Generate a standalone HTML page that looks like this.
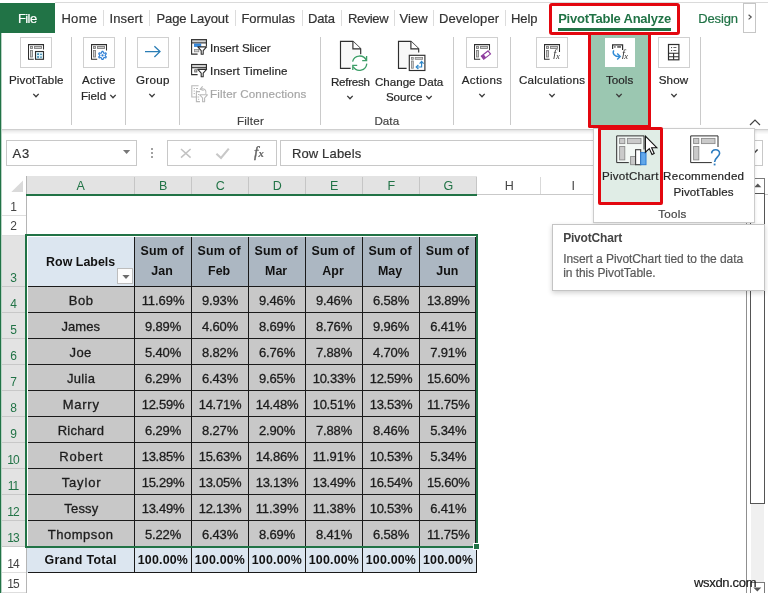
<!DOCTYPE html>
<html><head><meta charset="utf-8"><title>PivotTable Analyze</title>
<style>
html,body{margin:0;padding:0;}
body{width:768px;height:593px;position:relative;overflow:hidden;background:#fff;font-family:"Liberation Sans",sans-serif;}
.t{position:absolute;white-space:nowrap;line-height:1;-webkit-text-stroke:0.2px currentColor;}
.b{position:absolute;box-sizing:border-box;}
#w{position:absolute;left:0;top:0;width:768px;height:593px;will-change:transform;}
</style></head><body><div id="w">
<div class="b" style="left:0px;top:0px;width:768px;height:3px;background:#ffffff;"></div>
<div class="b" style="left:0px;top:3px;width:1px;height:590px;background:#217346;"></div>
<div class="b" style="left:1px;top:33px;width:1px;height:560px;background:#b9d3c5;"></div>
<div class="b" style="left:55px;top:2px;width:713px;height:1px;background:#dadada;"></div>
<div class="b" style="left:0px;top:3px;width:55px;height:30px;background:#217346;"></div>
<span class="t" style="left:17.90px;top:11.75px;font-size:13px;color:#fff;letter-spacing:-0.549px;">File</span>
<span class="t" style="left:61.40px;top:12.00px;font-size:13px;color:#333;letter-spacing:0.341px;">Home</span>
<span class="t" style="left:109.40px;top:12.00px;font-size:13px;color:#333;letter-spacing:0.137px;">Insert</span>
<span class="t" style="left:156.40px;top:12.00px;font-size:13px;color:#333;letter-spacing:-0.080px;">Page Layout</span>
<span class="t" style="left:241.40px;top:12.00px;font-size:13px;color:#333;letter-spacing:-0.068px;">Formulas</span>
<span class="t" style="left:307.90px;top:12.00px;font-size:13px;color:#333;letter-spacing:-0.087px;">Data</span>
<span class="t" style="left:347.90px;top:12.00px;font-size:13px;color:#333;letter-spacing:-0.385px;">Review</span>
<span class="t" style="left:399.40px;top:12.00px;font-size:13px;color:#333;letter-spacing:0.086px;">View</span>
<span class="t" style="left:438.90px;top:12.00px;font-size:13px;color:#333;letter-spacing:0.118px;">Developer</span>
<span class="t" style="left:510.90px;top:12.00px;font-size:13px;color:#333;letter-spacing:-0.012px;">Help</span>
<div class="b" style="left:103.0px;top:10px;width:1px;height:16px;background:#dcdcdc;"></div>
<div class="b" style="left:149.0px;top:10px;width:1px;height:16px;background:#dcdcdc;"></div>
<div class="b" style="left:235.0px;top:10px;width:1px;height:16px;background:#dcdcdc;"></div>
<div class="b" style="left:302.0px;top:10px;width:1px;height:16px;background:#dcdcdc;"></div>
<div class="b" style="left:340.5px;top:10px;width:1px;height:16px;background:#dcdcdc;"></div>
<div class="b" style="left:394.0px;top:10px;width:1px;height:16px;background:#dcdcdc;"></div>
<div class="b" style="left:433.25px;top:10px;width:1px;height:16px;background:#dcdcdc;"></div>
<div class="b" style="left:505.0px;top:10px;width:1px;height:16px;background:#dcdcdc;"></div>
<span class="t" style="left:558.20px;top:12.00px;font-size:13px;color:#217346;font-weight:bold;-webkit-text-stroke:0;letter-spacing:-0.237px;">PivotTable Analyze</span>
<div class="b" style="left:558px;top:28px;width:113px;height:3px;background:#217346;"></div>
<span class="t" style="left:698.20px;top:12.00px;font-size:13px;color:#217346;letter-spacing:-0.133px;">Design</span>
<div class="b" style="left:743px;top:3px;width:13px;height:30px;background:#fff;border:1px solid #c6c6c6;"></div>
<svg class="b" style="left:746px;top:12px;" width="8" height="11" viewBox="0 0 8 11"><path d="M2.6 2.8 L5.2 5.1 L2.6 7.4" fill="none" stroke="#555" stroke-width="1.2"/></svg>
<div class="b" style="left:2px;top:129px;width:766px;height:1px;background:#cfcfcf;"></div>
<div class="b" style="left:2px;top:130px;width:766px;height:1px;background:#e6e6e6;"></div>
<div class="b" style="left:2px;top:131px;width:766px;height:1px;background:#efefef;"></div>
<div class="b" style="left:2px;top:132px;width:766px;height:1px;background:#f5f5f5;"></div>
<div class="b" style="left:2px;top:133px;width:766px;height:1px;background:#fafafa;"></div>
<div class="b" style="left:71.0px;top:37px;width:1px;height:88px;background:#cacaca;"></div>
<div class="b" style="left:125.0px;top:37px;width:1px;height:88px;background:#cacaca;"></div>
<div class="b" style="left:179.0px;top:37px;width:1px;height:88px;background:#cacaca;"></div>
<div class="b" style="left:320.25px;top:37px;width:1px;height:88px;background:#cacaca;"></div>
<div class="b" style="left:453.0px;top:37px;width:1px;height:88px;background:#cacaca;"></div>
<div class="b" style="left:510.0px;top:37px;width:1px;height:88px;background:#cacaca;"></div>
<div class="b" style="left:699.5px;top:37px;width:1px;height:88px;background:#cacaca;"></div>
<div class="b" style="left:20px;top:37px;width:32px;height:31px;background:#fff;border:1px solid #d0d0d0;"></div>
<div class="b" style="left:83px;top:37px;width:32px;height:31px;background:#fff;border:1px solid #d0d0d0;"></div>
<div class="b" style="left:137px;top:37px;width:32px;height:31px;background:#fff;border:1px solid #d0d0d0;"></div>
<div class="b" style="left:466px;top:37px;width:32px;height:31px;background:#fff;border:1px solid #d0d0d0;"></div>
<div class="b" style="left:536px;top:37px;width:32px;height:31px;background:#fff;border:1px solid #d0d0d0;"></div>
<div class="b" style="left:658px;top:37px;width:32px;height:31px;background:#fff;border:1px solid #d0d0d0;"></div>
<div class="b" style="left:591px;top:35px;width:58px;height:90px;background:#9bc7b1;"></div>
<div class="b" style="left:604.8px;top:38px;width:30.4px;height:29px;background:#fff;"></div>
<span class="t" style="left:8.90px;top:73.93px;font-size:11.6px;color:#262626;letter-spacing:0.131px;">PivotTable</span>
<svg class="b" style="left:30.5px;top:91px;" width="10" height="8" viewBox="0 0 10 8"><path d="M2.3 2.9 L5 5.699999999999999 L7.7 2.9" fill="none" stroke="#3a3a3a" stroke-width="1.35"/></svg>
<span class="t" style="left:81.90px;top:73.93px;font-size:11.6px;color:#262626;letter-spacing:0.422px;">Active</span>
<span class="t" style="left:80.90px;top:89.68px;font-size:11.6px;color:#262626;letter-spacing:0.014px;">Field</span>
<svg class="b" style="left:107.5px;top:91.7px;" width="10" height="8" viewBox="0 0 10 8"><path d="M2.3 2.9 L5 5.699999999999999 L7.7 2.9" fill="none" stroke="#3a3a3a" stroke-width="1.35"/></svg>
<span class="t" style="left:135.90px;top:73.93px;font-size:11.6px;color:#262626;letter-spacing:0.303px;">Group</span>
<svg class="b" style="left:147px;top:91px;" width="10" height="8" viewBox="0 0 10 8"><path d="M2.3 2.9 L5 5.699999999999999 L7.7 2.9" fill="none" stroke="#3a3a3a" stroke-width="1.35"/></svg>
<span class="t" style="left:210.10px;top:42.18px;font-size:11.6px;color:#262626;letter-spacing:-0.062px;">Insert Slicer</span>
<span class="t" style="left:210.10px;top:65.18px;font-size:11.6px;color:#262626;letter-spacing:0.148px;">Insert Timeline</span>
<span class="t" style="left:210.10px;top:88.18px;font-size:11.6px;color:#a6a6a6;letter-spacing:0.163px;">Filter Connections</span>
<span class="t" style="left:236.90px;top:115.18px;font-size:11.6px;color:#444;letter-spacing:0.235px;">Filter</span>
<span class="t" style="left:330.90px;top:75.93px;font-size:11.6px;color:#262626;letter-spacing:-0.236px;">Refresh</span>
<svg class="b" style="left:345px;top:93px;" width="10" height="8" viewBox="0 0 10 8"><path d="M2.3 2.9 L5 5.699999999999999 L7.7 2.9" fill="none" stroke="#3a3a3a" stroke-width="1.35"/></svg>
<span class="t" style="left:374.90px;top:75.93px;font-size:11.6px;color:#262626;letter-spacing:0.009px;">Change Data</span>
<span class="t" style="left:385.90px;top:91.43px;font-size:11.6px;color:#262626;letter-spacing:-0.011px;">Source</span>
<svg class="b" style="left:423.7px;top:93px;" width="10" height="8" viewBox="0 0 10 8"><path d="M2.3 2.9 L5 5.699999999999999 L7.7 2.9" fill="none" stroke="#3a3a3a" stroke-width="1.35"/></svg>
<span class="t" style="left:374.40px;top:115.18px;font-size:11.6px;color:#444;letter-spacing:0.066px;">Data</span>
<span class="t" style="left:461.65px;top:73.93px;font-size:11.6px;color:#262626;letter-spacing:0.402px;">Actions</span>
<svg class="b" style="left:476.5px;top:91px;" width="10" height="8" viewBox="0 0 10 8"><path d="M2.3 2.9 L5 5.699999999999999 L7.7 2.9" fill="none" stroke="#3a3a3a" stroke-width="1.35"/></svg>
<span class="t" style="left:518.90px;top:73.93px;font-size:11.6px;color:#262626;letter-spacing:0.274px;">Calculations</span>
<svg class="b" style="left:546.5px;top:91px;" width="10" height="8" viewBox="0 0 10 8"><path d="M2.3 2.9 L5 5.699999999999999 L7.7 2.9" fill="none" stroke="#3a3a3a" stroke-width="1.35"/></svg>
<span class="t" style="left:605.90px;top:73.93px;font-size:11.6px;color:#262626;letter-spacing:0.080px;">Tools</span>
<svg class="b" style="left:614.3px;top:91px;" width="10" height="8" viewBox="0 0 10 8"><path d="M2.3 2.9 L5 5.699999999999999 L7.7 2.9" fill="none" stroke="#3a3a3a" stroke-width="1.35"/></svg>
<span class="t" style="left:658.70px;top:73.93px;font-size:11.6px;color:#262626;letter-spacing:0.161px;">Show</span>
<svg class="b" style="left:669px;top:91px;" width="10" height="8" viewBox="0 0 10 8"><path d="M2.3 2.9 L5 5.699999999999999 L7.7 2.9" fill="none" stroke="#3a3a3a" stroke-width="1.35"/></svg>
<svg class="b" style="left:748px;top:117px;" width="14" height="10" viewBox="0 0 14 10"><path d="M2 8 L7 3 L12 8" fill="none" stroke="#444" stroke-width="1.2"/></svg>
<svg class="b" style="left:28px;top:44px;" width="18" height="18" viewBox="0 0 18 18"><path d="M15.5 5.4 V0.6 H0.5 V15.3 H5.8" fill="none" stroke="#2e2e2e" stroke-width="1.05"/><rect x="2.5" y="2.5" width="2" height="2" fill="#cfcfcf" stroke="#808080" stroke-width="0.9"/><rect x="6.5" y="2.5" width="7" height="2" fill="#cfcfcf" stroke="#808080" stroke-width="0.9"/><rect x="2.5" y="6.5" width="2" height="6.5" fill="#cfcfcf" stroke="#808080" stroke-width="0.9"/><rect x="7.5" y="7.5" width="8" height="7.8" fill="#dff1f7" stroke="#2e2e2e" stroke-width="1.1"/><rect x="9.2" y="9.3" width="1.7" height="1.7" fill="#2e7fa8"/><rect x="9.2" y="12.1" width="1.7" height="1.7" fill="#2e7fa8"/><rect x="12" y="9.8" width="2" height="1" fill="#2e7fa8"/><rect x="12" y="12.6" width="2" height="1" fill="#2e7fa8"/></svg>
<svg class="b" style="left:91px;top:44px;" width="18" height="18" viewBox="0 0 18 18"><path d="M15.5 6.6 V0.6 H0.5 V15.3 H6.2" fill="none" stroke="#2e2e2e" stroke-width="1.05"/><rect x="2.5" y="2.5" width="2" height="2" fill="#cfcfcf" stroke="#808080" stroke-width="0.9"/><rect x="6.5" y="2.5" width="7" height="2" fill="#cfcfcf" stroke="#808080" stroke-width="0.9"/><rect x="2.5" y="6.5" width="2" height="6.5" fill="#cfcfcf" stroke="#808080" stroke-width="0.9"/><path d="M10.96 7.34 L12.04 7.34 L12.53 8.91 L13.14 9.26 L14.75 8.90 L15.29 9.83 L14.18 11.05 L14.18 11.75 L15.29 12.97 L14.75 13.90 L13.14 13.54 L12.53 13.89 L12.04 15.46 L10.96 15.46 L10.47 13.89 L9.86 13.54 L8.25 13.90 L7.71 12.97 L8.82 11.75 L8.82 11.05 L7.71 9.83 L8.25 8.90 L9.86 9.26 L10.47 8.91 Z" fill="#fff" stroke="#2b7cd3" stroke-width="1.15" stroke-linejoin="round"/><circle cx="11.5" cy="11.4" r="1.15" fill="#2b7cd3"/></svg>
<svg class="b" style="left:143px;top:44px;" width="20" height="16" viewBox="0 0 20 16"><path d="M2 7.6 H17 M11.4 2.2 L17 7.6 L11.4 13" fill="none" stroke="#2a7db5" stroke-width="1.3"/></svg>
<svg class="b" style="left:191px;top:39px;" width="17" height="17" viewBox="0 0 17 17"><path d="M6.6 15.1 H0.6 V0.7 H15.4 V7" fill="none" stroke="#2e2e2e" stroke-width="1.1"/><rect x="0.6" y="0.7" width="14.8" height="3.2" fill="#d4d4d4" stroke="#2e2e2e" stroke-width="1.1"/><rect x="3.4" y="5" width="6.4" height="2.4" fill="#3b8ede" stroke="#2b7cd3" stroke-width="0.8"/><rect x="3.4" y="10.4" width="4.4" height="2.4" fill="#d0d0d0" stroke="#8c8c8c" stroke-width="0.8"/><path d="M6.8 7.9 H15.600000000000001 L12.2 11.7 V15.3 H10.2 V11.7 Z" fill="#fff" stroke="#2e2e2e" stroke-width="1.1" stroke-linejoin="round"/></svg>
<svg class="b" style="left:191px;top:63px;" width="17" height="16" viewBox="0 0 17 16"><path d="M6.6 11.6 H0.6 V1.5 H15.4 V6" fill="none" stroke="#2e2e2e" stroke-width="1.1"/><rect x="0.6" y="1.5" width="14.8" height="3.2" fill="#d4d4d4" stroke="#2e2e2e" stroke-width="1.1"/><rect x="3.7" y="6.8" width="2.2" height="2.2" fill="#d0d0d0" stroke="#5c5c5c" stroke-width="0.8"/><path d="M6.8 6.4 H15.600000000000001 L12.2 10.2 V13.8 H10.2 V10.2 Z" fill="#fff" stroke="#2e2e2e" stroke-width="1.1" stroke-linejoin="round"/></svg>
<svg class="b" style="left:191px;top:84.5px;" width="19" height="18" viewBox="0 0 19 18"><path d="M6.5 12 H0.8 V0.8 H7.6 " fill="none" stroke="#b9b9b9" stroke-width="1.1"/><path d="M2.6 3.5 h1.4 M5 3.5 h2 M2.6 6 h1.4 M5 6 h1 M2.6 8.6 h1.4" stroke="#b9b9b9" stroke-width="1"/><path d="M9 16.6 H5.4 V6.6 H9" fill="none" stroke="#b9b9b9" stroke-width="1.1"/><path d="M7 9.5 h1.2 M7 12 h1.2 M7 14.3 h1.2" stroke="#b9b9b9" stroke-width="1"/><path d="M9.5 4.2 C13 2.6 16 5.5 14.8 9" fill="none" stroke="#b9b9b9" stroke-width="1.1"/><path d="M11.6 1.4 L9.2 4.3 L12.6 5.6" fill="none" stroke="#b9b9b9" stroke-width="1.1"/><path d="M8.8 9.8 H16.4 L13.6 13 V16.8 H11.6 V13 Z" fill="#fff" stroke="#b9b9b9" stroke-width="1.1" stroke-linejoin="round"/></svg>
<svg class="b" style="left:338px;top:39px;" width="32" height="34" viewBox="0 0 32 34"><path d="M12.6 29.4 H2.5 V2.4 H14.9 L22.7 9.8 V15.2" fill="#f8f8f8" stroke="#2e2e2e" stroke-width="1.15"/><path d="M14.9 2.4 V9.8 H22.7" fill="#fff" stroke="#2e2e2e" stroke-width="1.15"/><circle cx="21.7" cy="24.3" r="8.6" fill="#fff"/><path d="M14.6 22.6 A7.3 7.3 0 0 1 28.3 21.2" fill="none" stroke="#3d9e68" stroke-width="1.3"/><path d="M28.8 24.6 A7.3 7.3 0 0 1 15.2 27.6" fill="none" stroke="#3d9e68" stroke-width="1.3"/><path d="M24.2 21.6 H28.6 V17" fill="none" stroke="#3d9e68" stroke-width="1.3"/><path d="M19.2 26.4 H14.8 V31" fill="none" stroke="#3d9e68" stroke-width="1.3"/></svg>
<svg class="b" style="left:396px;top:39px;" width="32" height="34" viewBox="0 0 32 34"><path d="M10.6 29.4 H2.5 V2.4 H14.9 L22.7 9.8 V13.6" fill="#f8f8f8" stroke="#2e2e2e" stroke-width="1.15"/><path d="M14.9 2.4 V9.8 H22.7" fill="#fff" stroke="#2e2e2e" stroke-width="1.15"/><rect x="13.3" y="16.3" width="15.6" height="15.2" fill="#fff" stroke="#2e2e2e" stroke-width="1.15"/><rect x="15.5" y="18.5" width="1.8" height="1.8" fill="#cfcfcf" stroke="#808080" stroke-width="0.8"/><rect x="19.2" y="18.5" width="7.4" height="1.8" fill="#cfcfcf" stroke="#808080" stroke-width="0.8"/><rect x="15.5" y="22" width="1.8" height="7.2" fill="#cfcfcf" stroke="#808080" stroke-width="0.8"/><path d="M20.6 28 H25.6 V23" fill="none" stroke="#2e86c8" stroke-width="1.2"/><path d="M22.4 26 L20.2 28 L22.4 30" fill="none" stroke="#2e86c8" stroke-width="1.2"/><path d="M23.6 24.6 L25.6 22.4 L27.6 24.6" fill="none" stroke="#2e86c8" stroke-width="1.2"/></svg>
<svg class="b" style="left:474px;top:44px;" width="18" height="18" viewBox="0 0 18 18"><path d="M15.5 6.2 V0.6 H0.5 V15.3 H6.2" fill="none" stroke="#2e2e2e" stroke-width="1.05"/><rect x="2.5" y="2.5" width="2" height="2" fill="#cfcfcf" stroke="#808080" stroke-width="0.9"/><rect x="6.5" y="2.5" width="7" height="2" fill="#cfcfcf" stroke="#808080" stroke-width="0.9"/><rect x="2.5" y="6.5" width="2" height="6.5" fill="#cfcfcf" stroke="#808080" stroke-width="0.9"/><g transform="translate(11.9,11.1) rotate(-38)"><rect x="-4.3" y="-2" width="8.6" height="4" fill="#fff" stroke="#8f3d9f" stroke-width="1.1"/><rect x="-4.3" y="-2" width="3" height="4" fill="#8f3d9f"/></g></svg>
<svg class="b" style="left:544px;top:44px;" width="18" height="18" viewBox="0 0 18 18"><path d="M15.5 8 V0.6 H0.5 V15.3 H5.6" fill="none" stroke="#2e2e2e" stroke-width="1.05"/><rect x="2.5" y="2.5" width="2" height="2" fill="#cfcfcf" stroke="#808080" stroke-width="0.9"/><rect x="6.5" y="2.5" width="7" height="2" fill="#cfcfcf" stroke="#808080" stroke-width="0.9"/><rect x="2.5" y="6.5" width="2" height="6.5" fill="#cfcfcf" stroke="#808080" stroke-width="0.9"/><text x="9.3" y="13.3" style="font-family:'Liberation Serif',serif;font-style:italic;font-size:10.8px;" fill="#333">f</text><text x="12" y="14.9" style="font-family:'Liberation Serif',serif;font-style:italic;font-size:8.6px;" fill="#333">x</text></svg>
<svg class="b" style="left:610px;top:42px;" width="22" height="20" viewBox="0 0 22 20"><path d="M2.6 7 V2.8 H12.6 V8" fill="none" stroke="#2e2e2e" stroke-width="1.2"/><rect x="4.2" y="4.3" width="1.4" height="1.3" fill="#333"/><rect x="7.2" y="4.3" width="3.8" height="1.3" fill="#333"/><path d="M3.8 8.4 C2 11.5 4.5 14.6 9.6 14.6" fill="none" stroke="#2e8ad6" stroke-width="1.4"/><path d="M7.2 11.6 L10.2 14.6 L7.2 17.6" fill="none" stroke="#2e8ad6" stroke-width="1.4"/><text x="11.9" y="15.3" style="font-family:'Liberation Serif',serif;font-style:italic;font-size:10.8px;" fill="#333">f</text><text x="14.3" y="16.9" style="font-family:'Liberation Serif',serif;font-style:italic;font-size:8.6px;" fill="#333">x</text></svg>
<svg class="b" style="left:667px;top:43px;" width="14" height="18" viewBox="0 0 14 18"><rect x="1.5" y="1.5" width="10.4" height="15.3" fill="#fff" stroke="#2e2e2e" stroke-width="1.2"/><path d="M1.5 10.3 H11.9 M1.5 13.7 H11.9 M6.6 10.3 V16.8" stroke="#2e2e2e" stroke-width="1.1"/><rect x="4" y="4" width="1.1" height="1.1" fill="#555"/><rect x="6.4" y="4.1" width="3" height="0.9" fill="#555"/><rect x="4" y="7" width="1.1" height="1.1" fill="#555"/><rect x="6.4" y="7.1" width="3" height="0.9" fill="#555"/></svg>
<div class="b" style="left:549px;top:3px;width:131px;height:32px;border:3px solid #e3070f;border-radius:3px;"></div>
<div class="b" style="left:588px;top:32px;width:63px;height:95.6px;border:3px solid #e3070f;border-top:none;border-radius:0 0 2px 2px;"></div>
<div class="b" style="left:6px;top:140px;width:131px;height:26px;background:#fff;border:1px solid #c8c8c8;"></div>
<span class="t" style="left:12.40px;top:146.50px;font-size:13px;color:#333;letter-spacing:1.049px;">A3</span>
<svg class="b" style="left:122px;top:149px;" width="10" height="6" viewBox="0 0 10 6"><path d="M1 1 H8.2 L4.6 4.9 Z" fill="#777"/></svg>
<div class="b" style="left:151px;top:148px;width:2px;height:2px;background:#a2a2a2;"></div>
<div class="b" style="left:151px;top:152px;width:2px;height:2px;background:#a2a2a2;"></div>
<div class="b" style="left:151px;top:156px;width:2px;height:2px;background:#a2a2a2;"></div>
<div class="b" style="left:167px;top:140px;width:110px;height:26px;background:#fff;border:1px solid #c8c8c8;"></div>
<svg class="b" style="left:180px;top:148px;" width="12" height="11" viewBox="0 0 12 11"><path d="M1 1 L10.6 9.6 M10.6 1 L1 9.6" stroke="#c2c2c2" stroke-width="1.5" fill="none"/></svg>
<svg class="b" style="left:215px;top:147px;" width="16" height="13" viewBox="0 0 16 13"><path d="M1.4 6.8 L6 11 L13.8 1.6" stroke="#c8c8c8" stroke-width="2.1" fill="none"/></svg>
<span class="t" style="left:254px;top:144.6px;font-size:15px;font-family:'Liberation Serif',serif;font-style:italic;color:#666;-webkit-text-stroke:0.4px #666;">f</span>
<span class="t" style="left:258.6px;top:149px;font-size:10.5px;font-family:'Liberation Serif',serif;font-style:italic;font-weight:bold;color:#666;">x</span>
<div class="b" style="left:280px;top:140px;width:483px;height:26px;background:#fff;border:1px solid #c8c8c8;"></div>
<svg class="b" style="left:750px;top:148px;" width="9" height="7" viewBox="0 0 9 7"><path d="M1.2 1.6 L4.3 5 L7.6 1.4" fill="none" stroke="#444" stroke-width="1.5"/></svg>
<span class="t" style="left:291.90px;top:146.80px;font-size:13px;color:#333;letter-spacing:0.153px;">Row Labels</span>
<div class="b" style="left:26px;top:176px;width:450.5px;height:18px;background:#e3e3e3;"></div>
<div class="b" style="left:26px;top:194px;width:742px;height:1px;background:#c9c9c9;"></div>
<span class="t" style="left:76.53px;top:179.72px;font-size:12.5px;color:#217346;-webkit-text-stroke:0;">A</span>
<div class="b" style="left:133.5px;top:177px;width:1px;height:17px;background:#c6c6c6;"></div>
<span class="t" style="left:159.03px;top:179.72px;font-size:12.5px;color:#217346;-webkit-text-stroke:0;">B</span>
<div class="b" style="left:190.5px;top:177px;width:1px;height:17px;background:#c6c6c6;"></div>
<span class="t" style="left:215.69px;top:179.72px;font-size:12.5px;color:#217346;-webkit-text-stroke:0;">C</span>
<div class="b" style="left:247.5px;top:177px;width:1px;height:17px;background:#c6c6c6;"></div>
<span class="t" style="left:272.69px;top:179.72px;font-size:12.5px;color:#217346;-webkit-text-stroke:0;">D</span>
<div class="b" style="left:304.5px;top:177px;width:1px;height:17px;background:#c6c6c6;"></div>
<span class="t" style="left:330.03px;top:179.72px;font-size:12.5px;color:#217346;-webkit-text-stroke:0;">E</span>
<div class="b" style="left:361.5px;top:177px;width:1px;height:17px;background:#c6c6c6;"></div>
<span class="t" style="left:387.38px;top:179.72px;font-size:12.5px;color:#217346;-webkit-text-stroke:0;">F</span>
<div class="b" style="left:418.5px;top:177px;width:1px;height:17px;background:#c6c6c6;"></div>
<span class="t" style="left:443.59px;top:179.72px;font-size:12.5px;color:#217346;-webkit-text-stroke:0;">G</span>
<div class="b" style="left:476.0px;top:177px;width:1px;height:17px;background:#c6c6c6;"></div>
<span class="t" style="left:504.69px;top:179.72px;font-size:12.5px;color:#444;-webkit-text-stroke:0;">H</span>
<div class="b" style="left:540.0px;top:177px;width:1px;height:17px;background:#d9d9d9;"></div>
<span class="t" style="left:571.46px;top:179.72px;font-size:12.5px;color:#444;-webkit-text-stroke:0;">I</span>
<div class="b" style="left:604.0px;top:177px;width:1px;height:17px;background:#d9d9d9;"></div>
<div class="b" style="left:26px;top:194px;width:450.5px;height:2px;background:#217346;"></div>
<svg class="b" style="left:11px;top:180px;" width="13" height="13" viewBox="0 0 13 13"><path d="M12 0.6 V12 H0.3 Z" fill="#dadada"/></svg>
<div class="b" style="left:26px;top:176px;width:1px;height:18px;background:#b5b5b5;"></div>
<div class="b" style="left:2px;top:236px;width:24px;height:310.5px;background:#e3e3e3;"></div>
<span class="t" style="left:10.26px;top:200.64px;font-size:12px;color:#444;letter-spacing:-0.200px;-webkit-text-stroke:0;">1</span>
<div class="b" style="left:2px;top:215.0px;width:24px;height:1px;background:#dedede;"></div>
<span class="t" style="left:10.26px;top:220.14px;font-size:12px;color:#444;letter-spacing:-0.200px;-webkit-text-stroke:0;">2</span>
<div class="b" style="left:2px;top:234.5px;width:24px;height:1px;background:#dedede;"></div>
<span class="t" style="left:10.26px;top:271.64px;font-size:12px;color:#217346;letter-spacing:-0.200px;-webkit-text-stroke:0;">3</span>
<div class="b" style="left:2px;top:286.0px;width:24px;height:1px;background:#c8c8c8;"></div>
<span class="t" style="left:10.26px;top:297.64px;font-size:12px;color:#217346;letter-spacing:-0.200px;-webkit-text-stroke:0;">4</span>
<div class="b" style="left:2px;top:312.0px;width:24px;height:1px;background:#c8c8c8;"></div>
<span class="t" style="left:10.26px;top:323.64px;font-size:12px;color:#217346;letter-spacing:-0.200px;-webkit-text-stroke:0;">5</span>
<div class="b" style="left:2px;top:338.0px;width:24px;height:1px;background:#c8c8c8;"></div>
<span class="t" style="left:10.26px;top:349.64px;font-size:12px;color:#217346;letter-spacing:-0.200px;-webkit-text-stroke:0;">6</span>
<div class="b" style="left:2px;top:364.0px;width:24px;height:1px;background:#c8c8c8;"></div>
<span class="t" style="left:10.26px;top:375.64px;font-size:12px;color:#217346;letter-spacing:-0.200px;-webkit-text-stroke:0;">7</span>
<div class="b" style="left:2px;top:390.0px;width:24px;height:1px;background:#c8c8c8;"></div>
<span class="t" style="left:10.26px;top:401.64px;font-size:12px;color:#217346;letter-spacing:-0.200px;-webkit-text-stroke:0;">8</span>
<div class="b" style="left:2px;top:416.0px;width:24px;height:1px;background:#c8c8c8;"></div>
<span class="t" style="left:10.26px;top:427.64px;font-size:12px;color:#217346;letter-spacing:-0.200px;-webkit-text-stroke:0;">9</span>
<div class="b" style="left:2px;top:442.0px;width:24px;height:1px;background:#c8c8c8;"></div>
<span class="t" style="left:7.33px;top:453.64px;font-size:12px;color:#217346;letter-spacing:-1.000px;-webkit-text-stroke:0;">10</span>
<div class="b" style="left:2px;top:468.0px;width:24px;height:1px;background:#c8c8c8;"></div>
<span class="t" style="left:7.77px;top:479.64px;font-size:12px;color:#217346;letter-spacing:-1.000px;-webkit-text-stroke:0;">11</span>
<div class="b" style="left:2px;top:494.0px;width:24px;height:1px;background:#c8c8c8;"></div>
<span class="t" style="left:7.33px;top:505.64px;font-size:12px;color:#217346;letter-spacing:-1.000px;-webkit-text-stroke:0;">12</span>
<div class="b" style="left:2px;top:520.0px;width:24px;height:1px;background:#c8c8c8;"></div>
<span class="t" style="left:7.33px;top:531.64px;font-size:12px;color:#217346;letter-spacing:-1.000px;-webkit-text-stroke:0;">13</span>
<div class="b" style="left:2px;top:546.0px;width:24px;height:1px;background:#c8c8c8;"></div>
<span class="t" style="left:7.33px;top:557.64px;font-size:12px;color:#444;letter-spacing:-1.000px;-webkit-text-stroke:0;">14</span>
<div class="b" style="left:2px;top:572.0px;width:24px;height:1px;background:#dedede;"></div>
<span class="t" style="left:7.33px;top:577.64px;font-size:12px;color:#444;letter-spacing:-1.000px;-webkit-text-stroke:0;">15</span>
<div class="b" style="left:2px;top:592.0px;width:24px;height:1px;background:#dedede;"></div>
<div class="b" style="left:26px;top:196px;width:1px;height:397px;background:#b5b5b5;"></div>
<div class="b" style="left:28px;top:237px;width:106px;height:49.5px;background:#dce6f0;"></div>
<div class="b" style="left:134px;top:237px;width:342px;height:49.5px;background:#acb7c2;"></div>
<div class="b" style="left:28px;top:287px;width:448px;height:259.5px;background:#c8c8c8;"></div>
<div class="b" style="left:27px;top:548px;width:449.5px;height:24.5px;background:#dce6f0;"></div>
<div class="b" style="left:134px;top:237px;width:1px;height:309px;background:#1a1a1a;"></div>
<div class="b" style="left:134px;top:548px;width:1px;height:25px;background:#1a1a1a;"></div>
<div class="b" style="left:191px;top:237px;width:1px;height:309px;background:#1a1a1a;"></div>
<div class="b" style="left:191px;top:548px;width:1px;height:25px;background:#1a1a1a;"></div>
<div class="b" style="left:248px;top:237px;width:1px;height:309px;background:#1a1a1a;"></div>
<div class="b" style="left:248px;top:548px;width:1px;height:25px;background:#1a1a1a;"></div>
<div class="b" style="left:305px;top:237px;width:1px;height:309px;background:#1a1a1a;"></div>
<div class="b" style="left:305px;top:548px;width:1px;height:25px;background:#1a1a1a;"></div>
<div class="b" style="left:362px;top:237px;width:1px;height:309px;background:#1a1a1a;"></div>
<div class="b" style="left:362px;top:548px;width:1px;height:25px;background:#1a1a1a;"></div>
<div class="b" style="left:419px;top:237px;width:1px;height:309px;background:#1a1a1a;"></div>
<div class="b" style="left:419px;top:548px;width:1px;height:25px;background:#1a1a1a;"></div>
<div class="b" style="left:475px;top:237px;width:1px;height:309px;background:#1a1a1a;"></div>
<div class="b" style="left:476px;top:548px;width:1px;height:25px;background:#1a1a1a;"></div>
<div class="b" style="left:28px;top:286px;width:448px;height:1px;background:#1a1a1a;"></div>
<div class="b" style="left:28px;top:312px;width:448px;height:1px;background:#1a1a1a;"></div>
<div class="b" style="left:28px;top:338px;width:448px;height:1px;background:#1a1a1a;"></div>
<div class="b" style="left:28px;top:364px;width:448px;height:1px;background:#1a1a1a;"></div>
<div class="b" style="left:28px;top:390px;width:448px;height:1px;background:#1a1a1a;"></div>
<div class="b" style="left:28px;top:416px;width:448px;height:1px;background:#1a1a1a;"></div>
<div class="b" style="left:28px;top:442px;width:448px;height:1px;background:#1a1a1a;"></div>
<div class="b" style="left:28px;top:468px;width:448px;height:1px;background:#1a1a1a;"></div>
<div class="b" style="left:28px;top:494px;width:448px;height:1px;background:#1a1a1a;"></div>
<div class="b" style="left:28px;top:520px;width:448px;height:1px;background:#1a1a1a;"></div>
<div class="b" style="left:28px;top:572px;width:449px;height:1px;background:#1a1a1a;"></div>
<div class="b" style="left:25px;top:234px;width:453px;height:2px;background:#217346;"></div>
<div class="b" style="left:25px;top:234px;width:2px;height:314px;background:#217346;"></div>
<div class="b" style="left:25px;top:546px;width:450px;height:2px;background:#217346;"></div>
<div class="b" style="left:476px;top:234px;width:2px;height:310px;background:#217346;"></div>
<div class="b" style="left:473px;top:543.3px;width:7px;height:7px;background:#fff;"></div>
<div class="b" style="left:474px;top:544.3px;width:5.2px;height:5.2px;background:#217346;"></div>
<span class="t" style="left:46.10px;top:255.70px;font-size:12.4px;color:#111;font-weight:bold;-webkit-text-stroke:0;letter-spacing:0.033px;-webkit-text-stroke:0;">Row Labels</span>
<div class="b" style="left:117.4px;top:268.4px;width:16px;height:16px;background:#fcfcfc;border:1px solid #bdbdbd;"></div>
<svg class="b" style="left:121.6px;top:274px;" width="9" height="6" viewBox="0 0 9 6"><path d="M0.4 1 H7.6 L4 5 Z" fill="#6a6a6a"/></svg>
<span class="t" style="left:140.50px;top:244.90px;font-size:12.4px;color:#111;font-weight:bold;-webkit-text-stroke:0;letter-spacing:0.236px;-webkit-text-stroke:0;">Sum of</span>
<span class="t" style="left:151.35px;top:265.10px;font-size:12.4px;color:#111;font-weight:bold;-webkit-text-stroke:0;letter-spacing:0.066px;-webkit-text-stroke:0;">Jan</span>
<span class="t" style="left:197.50px;top:244.90px;font-size:12.4px;color:#111;font-weight:bold;-webkit-text-stroke:0;letter-spacing:0.236px;-webkit-text-stroke:0;">Sum of</span>
<span class="t" style="left:208.03px;top:265.10px;font-size:12.4px;color:#111;font-weight:bold;-webkit-text-stroke:0;letter-spacing:0.049px;-webkit-text-stroke:0;">Feb</span>
<span class="t" style="left:254.50px;top:244.90px;font-size:12.4px;color:#111;font-weight:bold;-webkit-text-stroke:0;letter-spacing:0.236px;-webkit-text-stroke:0;">Sum of</span>
<span class="t" style="left:265.03px;top:265.10px;font-size:12.4px;color:#111;font-weight:bold;-webkit-text-stroke:0;letter-spacing:0.049px;-webkit-text-stroke:0;">Mar</span>
<span class="t" style="left:311.50px;top:244.90px;font-size:12.4px;color:#111;font-weight:bold;-webkit-text-stroke:0;letter-spacing:0.236px;-webkit-text-stroke:0;">Sum of</span>
<span class="t" style="left:322.36px;top:265.10px;font-size:12.4px;color:#111;font-weight:bold;-webkit-text-stroke:0;letter-spacing:0.066px;-webkit-text-stroke:0;">Apr</span>
<span class="t" style="left:368.50px;top:244.90px;font-size:12.4px;color:#111;font-weight:bold;-webkit-text-stroke:0;letter-spacing:0.236px;-webkit-text-stroke:0;">Sum of</span>
<span class="t" style="left:378.04px;top:265.10px;font-size:12.4px;color:#111;font-weight:bold;-webkit-text-stroke:0;-webkit-text-stroke:0;">May</span>
<span class="t" style="left:425.75px;top:244.90px;font-size:12.4px;color:#111;font-weight:bold;-webkit-text-stroke:0;letter-spacing:0.236px;-webkit-text-stroke:0;">Sum of</span>
<span class="t" style="left:436.28px;top:265.10px;font-size:12.4px;color:#111;font-weight:bold;-webkit-text-stroke:0;letter-spacing:0.049px;-webkit-text-stroke:0;">Jun</span>
<span class="t" style="left:68.70px;top:294.00px;font-size:13px;color:#1c1c1c;letter-spacing:0.535px;-webkit-text-stroke:0.3px #1c1c1c;">Bob</span>
<span class="t" style="left:141.65px;top:294.00px;font-size:13px;color:#1c1c1c;letter-spacing:-0.045px;-webkit-text-stroke:0.3px #1c1c1c;">11.69%</span>
<span class="t" style="left:202.00px;top:294.00px;font-size:13px;color:#1c1c1c;letter-spacing:-0.165px;-webkit-text-stroke:0.3px #1c1c1c;">9.93%</span>
<span class="t" style="left:259.00px;top:294.00px;font-size:13px;color:#1c1c1c;letter-spacing:-0.165px;-webkit-text-stroke:0.3px #1c1c1c;">9.46%</span>
<span class="t" style="left:316.00px;top:294.00px;font-size:13px;color:#1c1c1c;letter-spacing:-0.165px;-webkit-text-stroke:0.3px #1c1c1c;">9.46%</span>
<span class="t" style="left:373.00px;top:294.00px;font-size:13px;color:#1c1c1c;letter-spacing:-0.165px;-webkit-text-stroke:0.3px #1c1c1c;">6.58%</span>
<span class="t" style="left:426.90px;top:294.00px;font-size:13px;color:#1c1c1c;letter-spacing:-0.238px;-webkit-text-stroke:0.3px #1c1c1c;">13.89%</span>
<span class="t" style="left:61.45px;top:320.00px;font-size:13px;color:#1c1c1c;letter-spacing:0.053px;-webkit-text-stroke:0.3px #1c1c1c;">James</span>
<span class="t" style="left:145.00px;top:320.00px;font-size:13px;color:#1c1c1c;letter-spacing:-0.165px;-webkit-text-stroke:0.3px #1c1c1c;">9.89%</span>
<span class="t" style="left:202.00px;top:320.00px;font-size:13px;color:#1c1c1c;letter-spacing:-0.165px;-webkit-text-stroke:0.3px #1c1c1c;">4.60%</span>
<span class="t" style="left:259.00px;top:320.00px;font-size:13px;color:#1c1c1c;letter-spacing:-0.165px;-webkit-text-stroke:0.3px #1c1c1c;">8.69%</span>
<span class="t" style="left:316.00px;top:320.00px;font-size:13px;color:#1c1c1c;letter-spacing:-0.165px;-webkit-text-stroke:0.3px #1c1c1c;">8.76%</span>
<span class="t" style="left:373.00px;top:320.00px;font-size:13px;color:#1c1c1c;letter-spacing:-0.165px;-webkit-text-stroke:0.3px #1c1c1c;">9.96%</span>
<span class="t" style="left:430.25px;top:320.00px;font-size:13px;color:#1c1c1c;letter-spacing:-0.165px;-webkit-text-stroke:0.3px #1c1c1c;">6.41%</span>
<span class="t" style="left:69.45px;top:346.00px;font-size:13px;color:#1c1c1c;letter-spacing:0.470px;-webkit-text-stroke:0.3px #1c1c1c;">Joe</span>
<span class="t" style="left:145.00px;top:346.00px;font-size:13px;color:#1c1c1c;letter-spacing:-0.165px;-webkit-text-stroke:0.3px #1c1c1c;">5.40%</span>
<span class="t" style="left:202.00px;top:346.00px;font-size:13px;color:#1c1c1c;letter-spacing:-0.165px;-webkit-text-stroke:0.3px #1c1c1c;">8.82%</span>
<span class="t" style="left:259.00px;top:346.00px;font-size:13px;color:#1c1c1c;letter-spacing:-0.165px;-webkit-text-stroke:0.3px #1c1c1c;">6.76%</span>
<span class="t" style="left:316.00px;top:346.00px;font-size:13px;color:#1c1c1c;letter-spacing:-0.165px;-webkit-text-stroke:0.3px #1c1c1c;">7.88%</span>
<span class="t" style="left:373.00px;top:346.00px;font-size:13px;color:#1c1c1c;letter-spacing:-0.165px;-webkit-text-stroke:0.3px #1c1c1c;">4.70%</span>
<span class="t" style="left:430.25px;top:346.00px;font-size:13px;color:#1c1c1c;letter-spacing:-0.165px;-webkit-text-stroke:0.3px #1c1c1c;">7.91%</span>
<span class="t" style="left:67.05px;top:372.00px;font-size:13px;color:#1c1c1c;letter-spacing:0.291px;-webkit-text-stroke:0.3px #1c1c1c;">Julia</span>
<span class="t" style="left:145.00px;top:372.00px;font-size:13px;color:#1c1c1c;letter-spacing:-0.165px;-webkit-text-stroke:0.3px #1c1c1c;">6.29%</span>
<span class="t" style="left:202.00px;top:372.00px;font-size:13px;color:#1c1c1c;letter-spacing:-0.165px;-webkit-text-stroke:0.3px #1c1c1c;">6.43%</span>
<span class="t" style="left:259.00px;top:372.00px;font-size:13px;color:#1c1c1c;letter-spacing:-0.165px;-webkit-text-stroke:0.3px #1c1c1c;">9.65%</span>
<span class="t" style="left:312.65px;top:372.00px;font-size:13px;color:#1c1c1c;letter-spacing:-0.238px;-webkit-text-stroke:0.3px #1c1c1c;">10.33%</span>
<span class="t" style="left:369.65px;top:372.00px;font-size:13px;color:#1c1c1c;letter-spacing:-0.238px;-webkit-text-stroke:0.3px #1c1c1c;">12.59%</span>
<span class="t" style="left:426.90px;top:372.00px;font-size:13px;color:#1c1c1c;letter-spacing:-0.238px;-webkit-text-stroke:0.3px #1c1c1c;">15.60%</span>
<span class="t" style="left:62.70px;top:398.00px;font-size:13px;color:#1c1c1c;letter-spacing:0.746px;-webkit-text-stroke:0.3px #1c1c1c;">Marry</span>
<span class="t" style="left:141.65px;top:398.00px;font-size:13px;color:#1c1c1c;letter-spacing:-0.238px;-webkit-text-stroke:0.3px #1c1c1c;">12.59%</span>
<span class="t" style="left:198.65px;top:398.00px;font-size:13px;color:#1c1c1c;letter-spacing:-0.238px;-webkit-text-stroke:0.3px #1c1c1c;">14.71%</span>
<span class="t" style="left:255.65px;top:398.00px;font-size:13px;color:#1c1c1c;letter-spacing:-0.238px;-webkit-text-stroke:0.3px #1c1c1c;">14.48%</span>
<span class="t" style="left:312.65px;top:398.00px;font-size:13px;color:#1c1c1c;letter-spacing:-0.238px;-webkit-text-stroke:0.3px #1c1c1c;">10.51%</span>
<span class="t" style="left:369.65px;top:398.00px;font-size:13px;color:#1c1c1c;letter-spacing:-0.238px;-webkit-text-stroke:0.3px #1c1c1c;">13.53%</span>
<span class="t" style="left:426.90px;top:398.00px;font-size:13px;color:#1c1c1c;letter-spacing:-0.045px;-webkit-text-stroke:0.3px #1c1c1c;">11.75%</span>
<span class="t" style="left:57.70px;top:424.00px;font-size:13px;color:#1c1c1c;letter-spacing:0.234px;-webkit-text-stroke:0.3px #1c1c1c;">Richard</span>
<span class="t" style="left:145.00px;top:424.00px;font-size:13px;color:#1c1c1c;letter-spacing:-0.165px;-webkit-text-stroke:0.3px #1c1c1c;">6.29%</span>
<span class="t" style="left:202.00px;top:424.00px;font-size:13px;color:#1c1c1c;letter-spacing:-0.165px;-webkit-text-stroke:0.3px #1c1c1c;">8.27%</span>
<span class="t" style="left:259.00px;top:424.00px;font-size:13px;color:#1c1c1c;letter-spacing:-0.165px;-webkit-text-stroke:0.3px #1c1c1c;">2.90%</span>
<span class="t" style="left:316.00px;top:424.00px;font-size:13px;color:#1c1c1c;letter-spacing:-0.165px;-webkit-text-stroke:0.3px #1c1c1c;">7.88%</span>
<span class="t" style="left:373.00px;top:424.00px;font-size:13px;color:#1c1c1c;letter-spacing:-0.165px;-webkit-text-stroke:0.3px #1c1c1c;">8.46%</span>
<span class="t" style="left:430.25px;top:424.00px;font-size:13px;color:#1c1c1c;letter-spacing:-0.165px;-webkit-text-stroke:0.3px #1c1c1c;">5.34%</span>
<span class="t" style="left:59.35px;top:450.00px;font-size:13px;color:#1c1c1c;letter-spacing:0.776px;-webkit-text-stroke:0.3px #1c1c1c;">Robert</span>
<span class="t" style="left:141.65px;top:450.00px;font-size:13px;color:#1c1c1c;letter-spacing:-0.238px;-webkit-text-stroke:0.3px #1c1c1c;">13.85%</span>
<span class="t" style="left:198.65px;top:450.00px;font-size:13px;color:#1c1c1c;letter-spacing:-0.238px;-webkit-text-stroke:0.3px #1c1c1c;">15.63%</span>
<span class="t" style="left:255.65px;top:450.00px;font-size:13px;color:#1c1c1c;letter-spacing:-0.238px;-webkit-text-stroke:0.3px #1c1c1c;">14.86%</span>
<span class="t" style="left:312.65px;top:450.00px;font-size:13px;color:#1c1c1c;letter-spacing:-0.045px;-webkit-text-stroke:0.3px #1c1c1c;">11.91%</span>
<span class="t" style="left:369.65px;top:450.00px;font-size:13px;color:#1c1c1c;letter-spacing:-0.238px;-webkit-text-stroke:0.3px #1c1c1c;">10.53%</span>
<span class="t" style="left:430.25px;top:450.00px;font-size:13px;color:#1c1c1c;letter-spacing:-0.165px;-webkit-text-stroke:0.3px #1c1c1c;">5.34%</span>
<span class="t" style="left:61.65px;top:476.00px;font-size:13px;color:#1c1c1c;letter-spacing:0.845px;-webkit-text-stroke:0.3px #1c1c1c;">Taylor</span>
<span class="t" style="left:141.65px;top:476.00px;font-size:13px;color:#1c1c1c;letter-spacing:-0.238px;-webkit-text-stroke:0.3px #1c1c1c;">15.29%</span>
<span class="t" style="left:198.65px;top:476.00px;font-size:13px;color:#1c1c1c;letter-spacing:-0.238px;-webkit-text-stroke:0.3px #1c1c1c;">13.05%</span>
<span class="t" style="left:255.65px;top:476.00px;font-size:13px;color:#1c1c1c;letter-spacing:-0.238px;-webkit-text-stroke:0.3px #1c1c1c;">13.13%</span>
<span class="t" style="left:312.65px;top:476.00px;font-size:13px;color:#1c1c1c;letter-spacing:-0.238px;-webkit-text-stroke:0.3px #1c1c1c;">13.49%</span>
<span class="t" style="left:369.65px;top:476.00px;font-size:13px;color:#1c1c1c;letter-spacing:-0.238px;-webkit-text-stroke:0.3px #1c1c1c;">16.54%</span>
<span class="t" style="left:426.90px;top:476.00px;font-size:13px;color:#1c1c1c;letter-spacing:-0.238px;-webkit-text-stroke:0.3px #1c1c1c;">15.60%</span>
<span class="t" style="left:64.35px;top:502.00px;font-size:13px;color:#1c1c1c;letter-spacing:0.168px;-webkit-text-stroke:0.3px #1c1c1c;">Tessy</span>
<span class="t" style="left:141.65px;top:502.00px;font-size:13px;color:#1c1c1c;letter-spacing:-0.238px;-webkit-text-stroke:0.3px #1c1c1c;">13.49%</span>
<span class="t" style="left:198.65px;top:502.00px;font-size:13px;color:#1c1c1c;letter-spacing:-0.238px;-webkit-text-stroke:0.3px #1c1c1c;">12.13%</span>
<span class="t" style="left:255.65px;top:502.00px;font-size:13px;color:#1c1c1c;letter-spacing:-0.045px;-webkit-text-stroke:0.3px #1c1c1c;">11.39%</span>
<span class="t" style="left:312.65px;top:502.00px;font-size:13px;color:#1c1c1c;letter-spacing:-0.045px;-webkit-text-stroke:0.3px #1c1c1c;">11.38%</span>
<span class="t" style="left:369.65px;top:502.00px;font-size:13px;color:#1c1c1c;letter-spacing:-0.238px;-webkit-text-stroke:0.3px #1c1c1c;">10.53%</span>
<span class="t" style="left:430.25px;top:502.00px;font-size:13px;color:#1c1c1c;letter-spacing:-0.165px;-webkit-text-stroke:0.3px #1c1c1c;">6.41%</span>
<span class="t" style="left:47.70px;top:528.00px;font-size:13px;color:#1c1c1c;letter-spacing:0.540px;-webkit-text-stroke:0.3px #1c1c1c;">Thompson</span>
<span class="t" style="left:145.00px;top:528.00px;font-size:13px;color:#1c1c1c;letter-spacing:-0.165px;-webkit-text-stroke:0.3px #1c1c1c;">5.22%</span>
<span class="t" style="left:202.00px;top:528.00px;font-size:13px;color:#1c1c1c;letter-spacing:-0.165px;-webkit-text-stroke:0.3px #1c1c1c;">6.43%</span>
<span class="t" style="left:259.00px;top:528.00px;font-size:13px;color:#1c1c1c;letter-spacing:-0.165px;-webkit-text-stroke:0.3px #1c1c1c;">8.69%</span>
<span class="t" style="left:316.00px;top:528.00px;font-size:13px;color:#1c1c1c;letter-spacing:-0.165px;-webkit-text-stroke:0.3px #1c1c1c;">8.41%</span>
<span class="t" style="left:373.00px;top:528.00px;font-size:13px;color:#1c1c1c;letter-spacing:-0.165px;-webkit-text-stroke:0.3px #1c1c1c;">6.58%</span>
<span class="t" style="left:426.90px;top:528.00px;font-size:13px;color:#1c1c1c;letter-spacing:-0.045px;-webkit-text-stroke:0.3px #1c1c1c;">11.75%</span>
<span class="t" style="left:44.40px;top:553.80px;font-size:12.4px;color:#111;font-weight:bold;-webkit-text-stroke:0;letter-spacing:0.354px;-webkit-text-stroke:0;">Grand Total</span>
<span class="t" style="left:137.70px;top:553.80px;font-size:12.4px;color:#111;font-weight:bold;-webkit-text-stroke:0;letter-spacing:0.208px;-webkit-text-stroke:0;">100.00%</span>
<span class="t" style="left:194.70px;top:553.80px;font-size:12.4px;color:#111;font-weight:bold;-webkit-text-stroke:0;letter-spacing:0.208px;-webkit-text-stroke:0;">100.00%</span>
<span class="t" style="left:251.70px;top:553.80px;font-size:12.4px;color:#111;font-weight:bold;-webkit-text-stroke:0;letter-spacing:0.208px;-webkit-text-stroke:0;">100.00%</span>
<span class="t" style="left:308.70px;top:553.80px;font-size:12.4px;color:#111;font-weight:bold;-webkit-text-stroke:0;letter-spacing:0.208px;-webkit-text-stroke:0;">100.00%</span>
<span class="t" style="left:365.70px;top:553.80px;font-size:12.4px;color:#111;font-weight:bold;-webkit-text-stroke:0;letter-spacing:0.208px;-webkit-text-stroke:0;">100.00%</span>
<span class="t" style="left:422.95px;top:553.80px;font-size:12.4px;color:#111;font-weight:bold;-webkit-text-stroke:0;letter-spacing:0.208px;-webkit-text-stroke:0;">100.00%</span>
<div class="b" style="left:746px;top:195px;width:1px;height:398px;background:#8f8f8f;"></div>
<div class="b" style="left:747px;top:195px;width:18px;height:398px;background:#fff;"></div>
<div class="b" style="left:751px;top:503px;width:13px;height:80px;background:#f0f0f0;"></div>
<div class="b" style="left:750px;top:178px;width:15px;height:16px;background:#fff;border:1px solid #7a7a7a;"></div>
<svg class="b" style="left:754px;top:183px;" width="8" height="5" viewBox="0 0 8 5"><path d="M0.3 4.2 H7.3 L3.8 0.4 Z" fill="#555"/></svg>
<div class="b" style="left:750px;top:193px;width:15px;height:310.5px;background:#fff;border:1px solid #555;"></div>
<div class="b" style="left:750px;top:582px;width:14.5px;height:12px;background:#fff;border:1px solid #7a7a7a;"></div>
<svg class="b" style="left:753px;top:587px;" width="9" height="5" viewBox="0 0 9 5"><path d="M0.3 0.4 H8.3 L4.3 4.6 Z" fill="#555"/></svg>
<span class="t" style="left:693.90px;top:576.30px;font-size:13px;color:#1a1a1a;letter-spacing:-0.290px;">wsxdn.com</span>
<div class="b" style="left:592.5px;top:128px;width:162px;height:94.5px;background:#fff;border:1px solid #cccccc;box-shadow:0 1px 3px rgba(0,0,0,0.12);"></div>
<div class="b" style="left:598px;top:127px;width:65px;height:77.5px;background:#e0ede6;border:3px solid #e3070f;border-radius:2px;"></div>
<span class="t" style="left:601.90px;top:170.18px;font-size:11.6px;color:#262626;letter-spacing:0.261px;">PivotChart</span>
<span class="t" style="left:663.10px;top:170.18px;font-size:11.6px;color:#262626;letter-spacing:0.234px;">Recommended</span>
<span class="t" style="left:673.40px;top:185.98px;font-size:11.6px;color:#262626;letter-spacing:0.088px;">PivotTables</span>
<span class="t" style="left:658.20px;top:208.48px;font-size:11.6px;color:#444;letter-spacing:0.255px;">Tools</span>
<svg class="b" style="left:615.8px;top:134.7px;" width="34" height="32" viewBox="0 0 34 32"><path d="M28 14.5 V0.9 H0.7 V27.6 H12.8" fill="#fff" fill-opacity="0.6" stroke="#2e2e2e" stroke-width="1.0"/><rect x="3.6" y="3.4" width="5.2" height="5.2" fill="#cacaca" stroke="#8c8c8c" stroke-width="0.9"/><rect x="11.4" y="3.4" width="13.6" height="5.2" fill="#cacaca" stroke="#8c8c8c" stroke-width="0.9"/><rect x="3.6" y="11.5" width="5.2" height="13.4" fill="#cacaca" stroke="#8c8c8c" stroke-width="0.9"/><rect x="14.6" y="21.5" width="5" height="8.2" fill="#c8c8c8" stroke="#8c8c8c" stroke-width="0.9"/><rect x="19.6" y="14.7" width="5.1" height="15" fill="#fff" stroke="#3b3b3b" stroke-width="1.1"/><rect x="24.7" y="17.6" width="5.3" height="12.1" fill="#62a8ea" stroke="#2b7cd3" stroke-width="1"/></svg>
<svg class="b" style="left:689.8px;top:134.5px;" width="34" height="32" viewBox="0 0 34 32"><path d="M28 12 V0.9 H0.7 V27.6 H21.8" fill="#fff" fill-opacity="0.6" stroke="#2e2e2e" stroke-width="1.0"/><rect x="3.6" y="3.4" width="5.2" height="5.2" fill="#cacaca" stroke="#8c8c8c" stroke-width="0.9"/><rect x="11.4" y="3.4" width="13.6" height="5.2" fill="#cacaca" stroke="#8c8c8c" stroke-width="0.9"/><rect x="3.6" y="11.5" width="5.2" height="13.4" fill="#cacaca" stroke="#8c8c8c" stroke-width="0.9"/><path d="M21.6 18.4 C21.8 13.6 29.6 13.4 29.6 18.2 C29.6 21.8 24.8 22.6 24.6 27" fill="none" stroke="#2b7bbf" stroke-width="1.6"/><rect x="23.7" y="28.6" width="1.8" height="1.8" fill="#2b7bbf"/></svg>
<svg class="b" style="left:643px;top:133px;" width="18" height="24" viewBox="0 0 18 24"><path d="M2.4 3 V19.2 L6.3 15.6 L9 21.4 L11.2 20.4 L8.6 14.7 H13.8 Z" fill="#fff" stroke="#111" stroke-width="1.1" stroke-linejoin="miter"/></svg>
<div class="b" style="left:551.5px;top:223.5px;width:213px;height:67.5px;background:#fff;border:1px solid #c4c4c4;box-shadow:0 2px 5px rgba(0,0,0,0.18);"></div>
<span class="t" style="left:563.15px;top:231.54px;font-size:12px;color:#444;font-weight:bold;-webkit-text-stroke:0;letter-spacing:-0.180px;">PivotChart</span>
<span class="t" style="left:563.15px;top:252.84px;font-size:12px;color:#5a5a5a;letter-spacing:-0.062px;">Insert a PivotChart tied to the data</span>
<span class="t" style="left:563.15px;top:267.24px;font-size:12px;color:#5a5a5a;letter-spacing:-0.052px;">in this PivotTable.</span>
</div></body></html>
